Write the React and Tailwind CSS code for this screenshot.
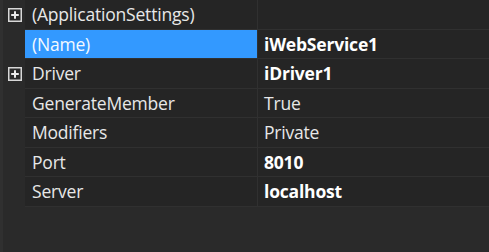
import React from 'react';

const rows = [
  { name: '(ApplicationSettings)', value: '', expand: true },
  { name: '(Name)', value: 'iWebService1', bold: true, selected: true },
  { name: 'Driver', value: 'iDriver1', bold: true, expand: true },
  { name: 'GenerateMember', value: 'True' },
  { name: 'Modifiers', value: 'Private' },
  { name: 'Port', value: '8010', bold: true },
  { name: 'Server', value: 'localhost', bold: true },
];

const PlusBox = () => (
  <svg width="14" height="14" viewBox="0 0 14 14">
    <rect x="0.75" y="0.75" width="12.5" height="12.5" fill="none" stroke="#d8d8d8" strokeWidth="1.5" />
    <path d="M3.2 7h7.6M7 3.2v7.6" stroke="#ececec" strokeWidth="2" />
  </svg>
);

export default function App() {
  return (
    <div
      className="w-[489px] h-[252px] bg-[#2a2a2a] flex overflow-hidden text-[#e8e8e8] text-[17.5px]"
      style={{ fontFamily: '"Open Sans", "Noto Sans", sans-serif' }}
    >
      <div className="w-[3px] bg-[#303030]" />
      <div className="flex-1 flex flex-col">
        {rows.map((row) => (
          <div key={row.name} className="flex h-[29.5px]">
            <div className="w-[22px] flex items-center justify-center bg-[#2a2a2a] pl-[1px]">
              {row.expand && <PlusBox />}
            </div>
            <div
              className={`w-[232px] flex items-center pl-[7px] border-b border-[#303030] tracking-[-0.2px] ${
                row.selected ? 'bg-[#3399ff] text-[#f4f9ff]' : 'bg-[#252525]'
              }`}
            >
              {row.name}
            </div>
            <div
              className={`flex-1 flex items-center pl-[6px] border-b border-l border-[#303030] bg-[#252525] tracking-[-0.2px] ${
                row.bold ? 'font-bold text-white' : ''
              }`}
            >
              {row.value}
            </div>
          </div>
        ))}
      </div>
    </div>
  );
}
